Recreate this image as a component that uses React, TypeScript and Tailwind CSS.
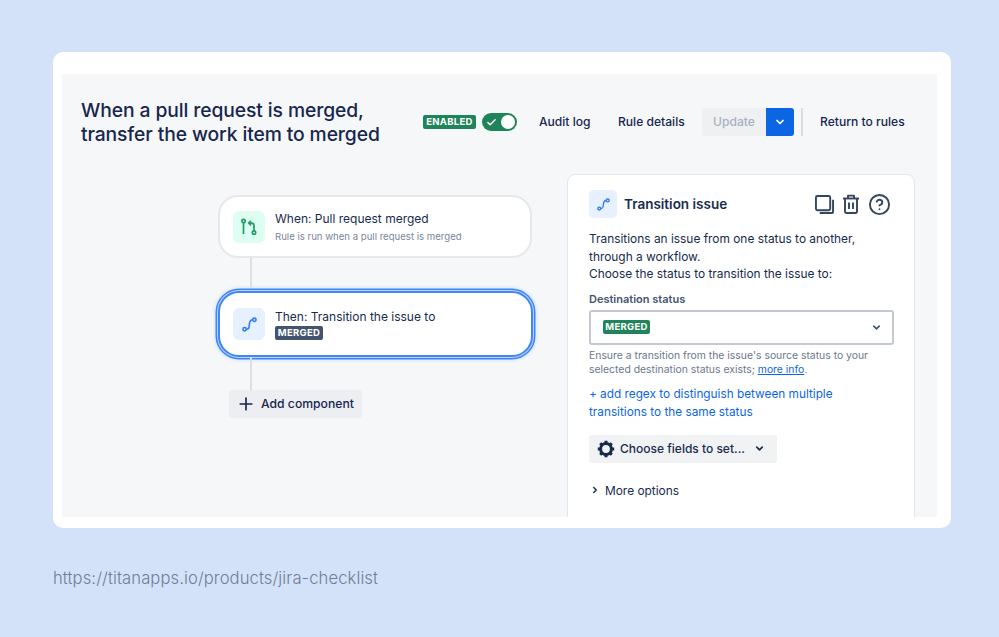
import { Check, ChevronDown, ChevronRight, CircleHelp, Plus } from "lucide-react"

function RouteIcon({ className }: { className?: string }) {
  return (
    <svg viewBox="0 0 16 16" fill="none" stroke="currentColor" strokeWidth="1.7" className={className}>
      <circle cx="2.8" cy="13" r="1.8" />
      <circle cx="13.2" cy="3" r="1.8" />
      <path d="M4.6 13c2.6 0 3-1 3.2-4.6C8 5 8.6 3 11.4 3" />
    </svg>
  )
}

function PullRequestIcon() {
  return (
    <svg viewBox="0 0 18 18" fill="none" stroke="#1f9d63" strokeWidth="1.7" className="w-[18px] h-[18px]">
      <circle cx="3.5" cy="3" r="1.7" />
      <path d="M3.5 5v11" />
      <circle cx="14" cy="14.5" r="1.7" />
      <path d="M14 12.6V7.5c0-1.6-1-2.4-2.6-2.4H9" />
      <path d="M11 2.8 8.7 5.1 11 7.4" />
    </svg>
  )
}

function CopyIcon() {
  return (
    <svg viewBox="0 0 20 20" fill="none" stroke="#33475f" strokeWidth="2" strokeLinejoin="round" className="w-[19px] h-[19px]">
      <rect x="1" y="1" width="15" height="15" rx="1.5" />
      <path d="M19 5v13a1 1 0 0 1-1 1H5" />
    </svg>
  )
}

function TrashIcon() {
  return (
    <svg viewBox="0 0 18 20" fill="none" stroke="#33475f" strokeWidth="1.9" strokeLinejoin="round" className="w-[18px] h-[20px]">
      <path d="M1 4.5h16" />
      <path d="M6 4.5V1.6h6v2.9" />
      <path d="M3 4.5v13.3a1.2 1.2 0 0 0 1.2 1.2h9.6a1.2 1.2 0 0 0 1.2-1.2V4.5" />
      <path d="M7 8.5v6.5M11 8.5v6.5" />
    </svg>
  )
}

function GearIcon() {
  return (
    <svg viewBox="0 0 18 18" fill="none" stroke="#172b4d" className="w-[18px] h-[18px]">
      <circle cx="9" cy="9" r="5.4" strokeWidth="3" />
      <path
        d="M9 .8v3M9 14.2v3M.8 9h3M14.2 9h3M3.2 3.2l2.1 2.1M12.7 12.7l2.1 2.1M3.2 14.8l2.1-2.1M12.7 5.3l2.1-2.1"
        strokeWidth="3"
      />
    </svg>
  )
}

export default function App() {
  return (
    <div className="w-[999px] h-[637px] bg-[#d3e2f9] pt-[52px] px-[53px] overflow-hidden font-['Inter',sans-serif]">
      <div className="w-[898px] h-[476px] bg-white rounded-[10px] pt-[22px] pl-[9px]">
        <div className="w-[875px] h-[443px] bg-[#f6f7f9] overflow-hidden">
          <header className="flex items-center h-[96px] pl-[19px]">
            <h1 className="w-[342px] text-[19.3px] leading-[24px] font-medium text-[#16264f] tracking-[-0.1px]">
              When a pull request is merged,
              <br />
              transfer the work item to merged
            </h1>
            <span className="w-[53px] mb-[1px] text-center bg-[#1f845a] text-white text-[9.5px] leading-[14px] font-bold tracking-[0.3px] rounded-[2px]">
              ENABLED
            </span>
            <span className="ml-[6px] w-[35px] h-[18px] rounded-full bg-[#1f845a] flex items-center justify-between pl-[4px] pr-[2px]">
              <Check className="w-[11px] h-[11px] text-white" strokeWidth={3} />
              <span className="w-[14px] h-[14px] rounded-full bg-white" />
            </span>
            <span className="ml-[22px] w-[51px] whitespace-nowrap text-[12.1px] font-medium text-[#16264f]">Audit log</span>
            <span className="ml-[28px] w-[67px] whitespace-nowrap text-[12.1px] font-medium text-[#16264f]">Rule details</span>
            <div className="ml-[17px] flex h-[28px]">
              <span className="w-[64px] bg-[#eff0f2] rounded-l-[3px] flex items-center justify-center text-[12.1px] font-medium text-[#a9b0bf]">
                Update
              </span>
              <span className="w-[28px] bg-[#0c66e4] rounded-r-[3px] flex items-center justify-center">
                <ChevronDown className="w-[12px] h-[12px] text-white" strokeWidth={3.5} />
              </span>
            </div>
            <span className="ml-[7px] w-[2px] h-[28px] bg-[#d9dce2]" />
            <span className="ml-[17px] whitespace-nowrap text-[12.1px] font-medium text-[#16264f]">Return to rules</span>
          </header>

          <div className="flex">
            <div className="w-[505px] pl-[155px] pt-[25px]">
              <div className="w-[314px] h-[63px] ml-[1px] bg-white border-2 border-[#e6e8ec] rounded-[20px] flex items-center pl-[13px]">
                <span className="w-[32px] h-[32px] rounded-[6px] bg-[#dcfff1] flex items-center justify-center">
                  <PullRequestIcon />
                </span>
                <div className="ml-[10px] mt-[2px]">
                  <p className="text-[12px] leading-[17px] text-[#172b4d]">When: Pull request merged</p>
                  <p className="text-[9.6px] leading-[17px] text-[#7a869a] mt-[1px]">Rule is run when a pull request is merged</p>
                </div>
              </div>
              <div className="ml-[33px] w-[2px] h-[33px] bg-[#dddfe4]" />
              <div className="w-[315px] h-[66px] ml-[1px] bg-white border-2 border-[#3f87f7] rounded-[21px] shadow-[0_0_0_1px_#b9d3fb,0_0_0_2.5px_#3f87f7,0_0_3px_4px_#dbe7fb] flex items-center pl-[13px]">
                <span className="w-[32px] h-[32px] rounded-[6px] bg-[#e6f0ff] flex items-center justify-center">
                  <RouteIcon className="w-[15px] h-[15px] text-[#2f7cf0]" />
                </span>
                <div className="ml-[10px]">
                  <p className="text-[12px] leading-[16px] text-[#172b4d]">Then: Transition the issue to</p>
                  <span className="block mt-[1px] w-[48px] text-center bg-[#44546f] text-white text-[9.5px] leading-[14px] font-bold tracking-[0.3px] rounded-[2px]">
                    MERGED
                  </span>
                </div>
              </div>
              <div className="ml-[33px] w-[2px] h-[33px] bg-[#dddfe4]" />
              <button className="ml-[12px] w-[133px] h-[28px] bg-[#eceef1] rounded-[3px] flex items-center pl-[7px] text-[12.2px] font-medium text-[#16264f]">
                <Plus className="w-[20px] h-[20px] mr-[5px]" strokeWidth={2} />
                Add component
              </button>
            </div>

            <aside className="w-[348px] h-[360px] mt-[4px] bg-white border border-[#e4e6ea] rounded-t-[8px] pl-[21px] pr-[21px] pt-[15px] text-[#172b4d]">
              <div className="flex items-center h-[28px]">
                <span className="w-[28px] h-[28px] rounded-[5px] bg-[#e6f0ff] flex items-center justify-center">
                  <RouteIcon className="w-[13px] h-[13px] text-[#2f7cf0]" />
                </span>
                <h2 className="ml-[7px] text-[13.5px] font-semibold">Transition issue</h2>
                <div className="ml-auto mr-[2px] flex items-center text-[#33475f]">
                  <CopyIcon />
                  <span className="ml-[8px]">
                    <TrashIcon />
                  </span>
                  <CircleHelp className="ml-[8px] w-[23px] h-[23px]" strokeWidth={2} />
                </div>
              </div>
              <p className="mt-[12px] text-[11.9px] leading-[17.5px] w-[300px]">
                Transitions an issue from one status to another, through a workflow.
                <br />
                Choose the status to transition the issue to:
              </p>
              <p className="mt-[8px] text-[11px] leading-[16px] font-semibold text-[#44546f]">Destination status</p>
              <div className="mt-[3px] w-[305px] h-[35px] bg-white border-2 border-[#c3c8d2] rounded-[3px] flex items-center pl-[12px] pr-[10px]">
                <span className="w-[47px] text-center bg-[#1f845a] text-white text-[9.5px] leading-[14px] font-bold tracking-[0.3px] rounded-[2px]">
                  MERGED
                </span>
                <ChevronDown className="ml-auto w-[11px] h-[11px] text-[#44546f]" strokeWidth={3.5} />
              </div>
              <p className="mt-[4px] text-[10.4px] leading-[14px] text-[#6b778c] w-[305px]">
                Ensure a transition from the issue's source status to your selected destination status exists;{" "}
                <span className="text-[#0c66e4] underline">more info</span>.
              </p>
              <p className="mt-[8px] text-[11.8px] leading-[18px] text-[#0c66e4]">
                + add regex to distinguish between multiple
                <br />
                transitions to the same status
              </p>
              <button className="mt-[14px] w-[188px] h-[28px] bg-[#f1f2f4] rounded-[3px] flex items-center pl-[8px] text-[12px] font-medium">
                <GearIcon />
                <span className="ml-[5px]">Choose fields to set...</span>
                <ChevronDown className="ml-[9px] w-[11px] h-[11px]" strokeWidth={3.5} />
              </button>
              <div className="mt-[19px] flex items-center text-[11.9px] leading-[17px]">
                <ChevronRight className="w-[10px] h-[10px] ml-[1px] mr-[5px]" strokeWidth={3.5} />
                More options
              </div>
            </aside>
          </div>
        </div>
      </div>
      <p className="mt-[38px] text-[16.6px] leading-[24px] font-light tracking-[0.1px] text-[#6f7e97]">
        https://titanapps.io/products/jira-checklist
      </p>
    </div>
  )
}
